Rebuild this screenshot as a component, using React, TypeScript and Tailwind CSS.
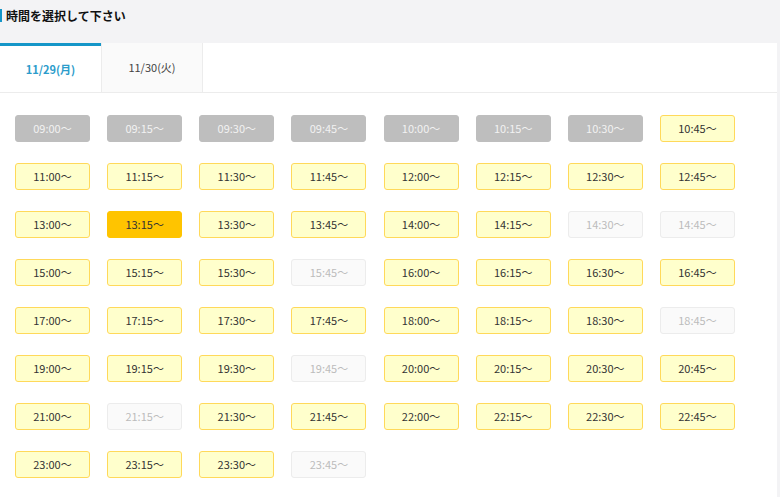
import React from 'react';

type Slot = { time: string; state: 'past' | 'open' | 'full' | 'selected' };

const past = ['09:00', '09:15', '09:30', '09:45', '10:00', '10:15', '10:30'];
const full = ['14:30', '14:45', '15:45', '18:45', '19:45', '21:15', '23:45'];

const slots: Slot[] = [];
for (let h = 9; h <= 23; h++) {
  for (const m of ['00', '15', '30', '45']) {
    const t = `${String(h).padStart(2, '0')}:${m}`;
    let state: Slot['state'] = 'open';
    if (past.includes(t)) state = 'past';
    else if (full.includes(t)) state = 'full';
    else if (t === '13:15') state = 'selected';
    slots.push({ time: t, state });
  }
}

const styles: Record<Slot['state'], string> = {
  past: 'bg-[#bebebe] border-[#bebebe] text-[#f2f2f2]',
  open: 'bg-[#ffffcc] border-[#ffd95a] text-[#333]',
  full: 'bg-[#fafafa] border-[#ececec] text-[#bcbcbc]',
  selected: 'bg-[#ffc400] border-[#ffc400] text-[#333]',
};

export default function App() {
  return (
    <div
      className="w-[780px] h-[497px] bg-[#f3f3f5] overflow-hidden"
      style={{ fontFamily: '"Noto Sans CJK JP", "Noto Sans", sans-serif' }}
    >
      {/* Title */}
      <div className="h-[43px] flex items-start pt-[7px]">
        <div className="w-[2px] h-[13px] bg-[#1596c8] mt-[2px]" />
        <h1 className="ml-[4px] text-[12px] font-bold text-[#111] leading-[17px]">時間を選択して下さい</h1>
      </div>

      <div className="w-[777px] bg-white h-[454px]">
        {/* Tabs */}
        <div className="flex h-[50px] border-b border-[#ececec]">
          <div className="w-[101px] border-t-[3px] border-[#1596c8] bg-white flex items-center justify-center text-[11px] font-bold text-[#2b9ccb]">
            11/29(月)
          </div>
          <div className="w-[102px] bg-[#fafafa] border-l border-r border-[#ececec] flex items-center justify-center text-[11px] text-[#444]">
            11/30(火)
          </div>
        </div>

        {/* Slots */}
        <div className="grid grid-cols-[repeat(8,75px)] gap-x-[17.15px] gap-y-[21px] pl-[15px] pt-[22px]">
          {slots.map((s) => (
            <button
              key={s.time}
              className={`h-[27px] rounded-[3px] border text-[11px] flex items-center justify-center ${styles[s.state]}`}
            >
              {s.time}〜
            </button>
          ))}
        </div>
      </div>
    </div>
  );
}
